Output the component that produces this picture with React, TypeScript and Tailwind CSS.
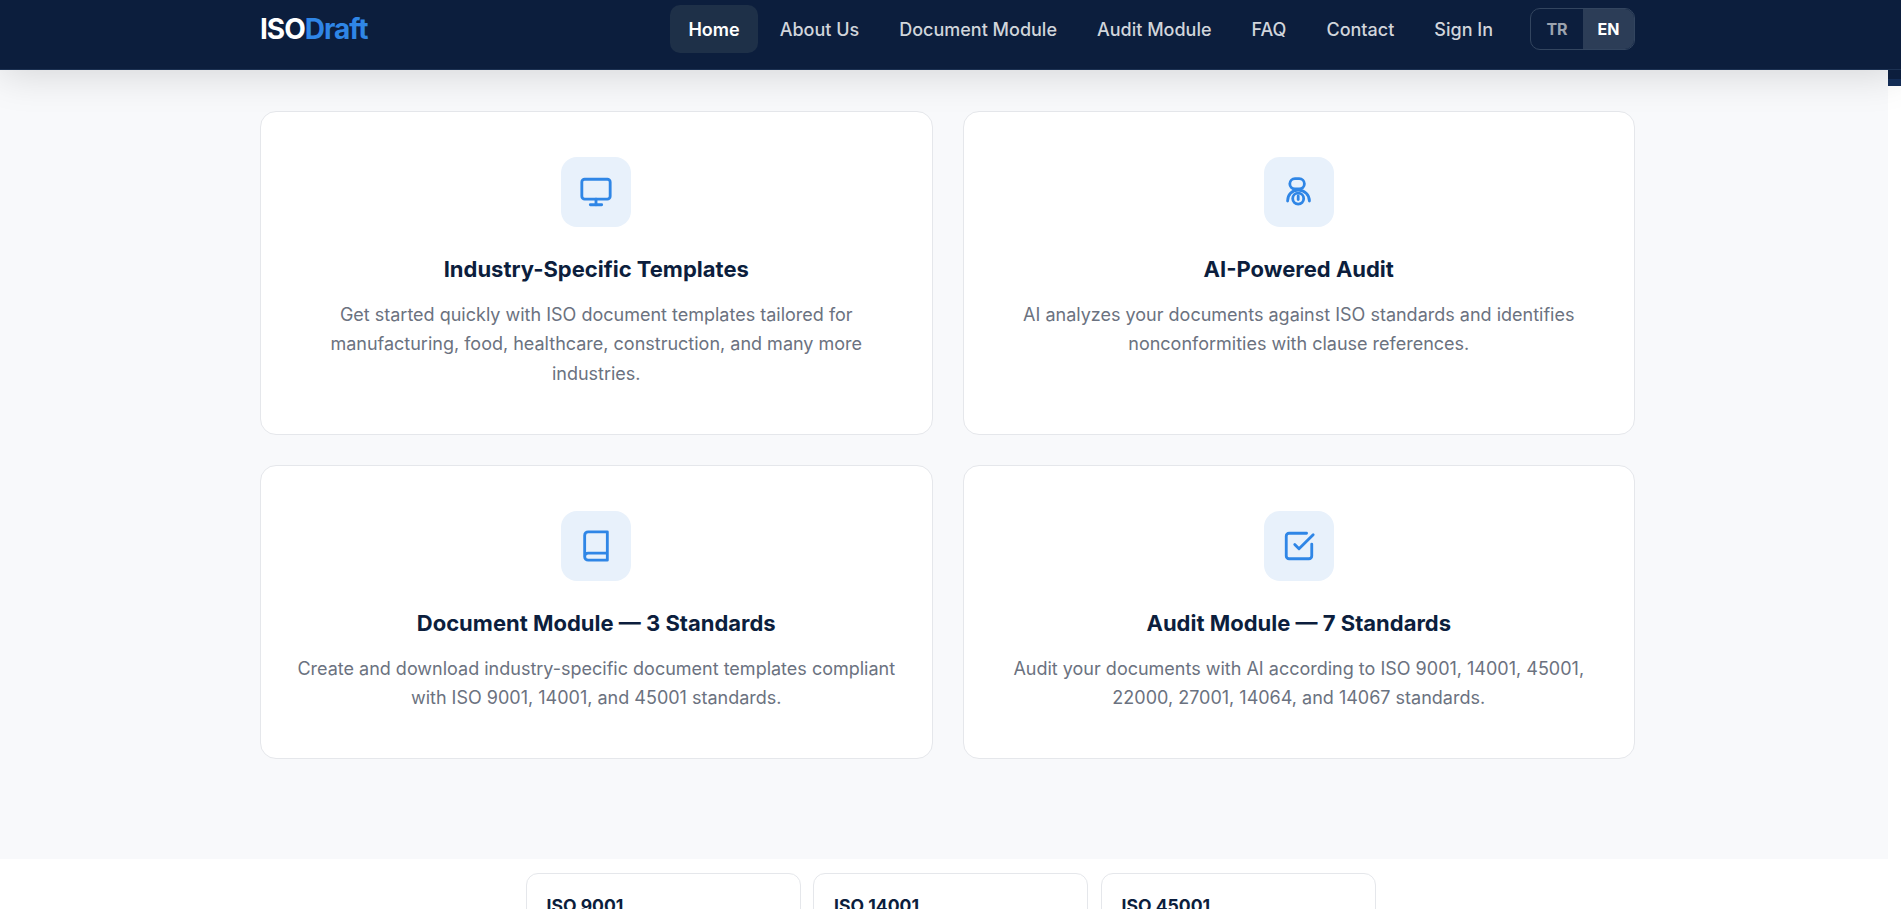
import { Monitor, SquareCheckBig } from 'lucide-react'
import type { ReactNode } from 'react'

const navItems = ['About Us', 'Document Module', 'Audit Module', 'FAQ', 'Contact', 'Sign In']

function AuditIcon() {
  return (
    <svg width="34" height="34" viewBox="0 0 34 34" fill="none" stroke="currentColor" strokeWidth="2.8" strokeLinecap="round">
      <rect x="7.8" y="3.6" width="14.6" height="10.4" rx="5.2" />
      <path d="M5.6 26c0-6.5 4.2-10.8 10.6-10.8s11.2 4.3 11.2 10.8" />
      <circle cx="16.2" cy="23.6" r="5.5" />
      <path d="M16.2 21v3.6" />
    </svg>
  )
}

function BookIcon() {
  return (
    <svg width="34" height="34" viewBox="0 0 24 24" fill="none" stroke="currentColor" strokeWidth="2" strokeLinecap="round" strokeLinejoin="round">
      <path d="M4 19.5v-15A2.5 2.5 0 0 1 6.5 2H20v20H6.5a2.5 2.5 0 0 1 0-5H20" />
    </svg>
  )
}

function FeatureCard({ icon, title, lines, height }: { icon: ReactNode; title: string; lines: string[]; height: string }) {
  return (
    <div className={`${height} flex flex-col items-center rounded-2xl border border-[#e5e7eb] bg-white pt-[45px] text-center`}>
      <div className="flex h-[70px] w-[70px] items-center justify-center rounded-2xl bg-[#e8f1fb] text-[#2f86e6]">
        {icon}
      </div>
      <h3 className="mt-[26px] text-[22px] leading-[32px] font-bold text-[#0c1e3d]">{title}</h3>
      <div className="mt-[14.5px] text-[18px] leading-[29.7px] text-[#6b7280]">
        {lines.map(line => (
          <p key={line}>{line}</p>
        ))}
      </div>
    </div>
  )
}

export default function App() {
  return (
    <div className="relative h-[909px] overflow-hidden bg-white font-['Inter',sans-serif]">
      <header className="relative z-10 flex h-[70px] justify-center border-b border-[#1c3152] bg-[#0c1e3d] pr-[6px] shadow-[0_4px_40px_rgba(0,0,0,0.15)]">
        <div className="flex w-[1375px] items-start justify-between">
          <div className="mt-[11px] text-[28px] leading-[36px] font-bold tracking-[-1px] text-white">
            ISO<span className="text-[#2f86e6]">Draft</span>
          </div>
          <nav className="flex items-start gap-[4px]">
            <a className="mt-[5px] flex h-[48px] items-center rounded-[10px] bg-[#1e3048] px-[18px] text-[18px] font-semibold text-white">
              Home
            </a>
            {navItems.map(item => (
              <a key={item} className="mt-[5px] flex h-[48px] items-center px-[18px] text-[18px] font-medium text-[#d1d5db]">
                {item}
              </a>
            ))}
            <div className="mt-[8px] ml-[15px] flex h-[42px] w-[105px] overflow-hidden rounded-[10px] border border-[#33455f] text-[16px] font-bold">
              <span className="flex w-[52px] items-center justify-center text-[#9ca3af]">TR</span>
              <span className="flex flex-1 items-center justify-center bg-[#2c3d57] text-white">EN</span>
            </div>
          </nav>
        </div>
      </header>

      <div className="absolute top-[70px] right-0 z-20 h-[16px] w-[13px] border-b-[7px] border-[#132c55] bg-[#0c1e3d]" />

      <main className="w-[1888px] bg-[#f8f9fb] pt-[41px] pl-[7px]">
        <div className="mx-auto grid h-[748px] w-[1375px] grid-cols-2 content-start gap-x-[30px] gap-y-[30px]">
          <FeatureCard
            height="h-[324px]"
            icon={<Monitor size={34} />}
            title="Industry-Specific Templates"
            lines={[
              'Get started quickly with ISO document templates tailored for',
              'manufacturing, food, healthcare, construction, and many more',
              'industries.',
            ]}
          />
          <FeatureCard
            height="h-[324px]"
            icon={<AuditIcon />}
            title="AI-Powered Audit"
            lines={[
              'AI analyzes your documents against ISO standards and identifies',
              'nonconformities with clause references.',
            ]}
          />
          <FeatureCard
            height="h-[294px]"
            icon={<BookIcon />}
            title="Document Module — 3 Standards"
            lines={[
              'Create and download industry-specific document templates compliant',
              'with ISO 9001, 14001, and 45001 standards.',
            ]}
          />
          <FeatureCard
            height="h-[294px]"
            icon={<SquareCheckBig size={34} />}
            title="Audit Module — 7 Standards"
            lines={[
              'Audit your documents with AI according to ISO 9001, 14001, 45001,',
              '22000, 27001, 14064, and 14067 standards.',
            ]}
          />
        </div>
      </main>

      <section className="flex justify-center gap-[12.5px] pt-[14px]">
        {['ISO 9001', 'ISO 14001', 'ISO 45001'].map(name => (
          <div key={name} className="h-[120px] w-[275px] rounded-xl border border-[#e5e7eb] bg-white px-[20px] pt-[18px]">
            <h4 className="text-[17.6px] leading-[28px] font-bold text-[#0c1e3d]">{name}</h4>
          </div>
        ))}
      </section>
    </div>
  )
}
